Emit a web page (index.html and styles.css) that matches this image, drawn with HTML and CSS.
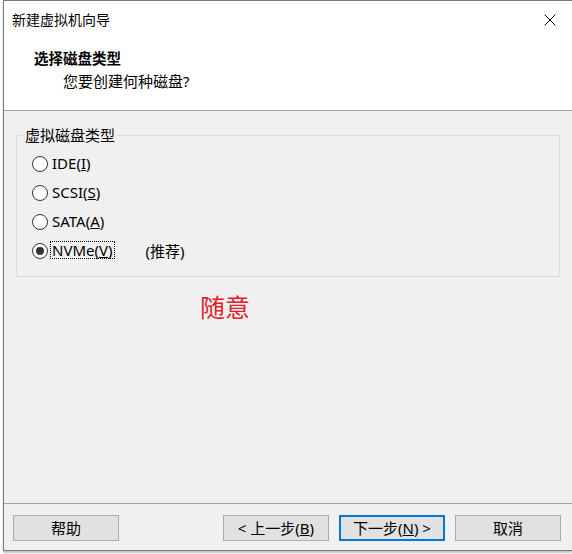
FILE: index.html
```html
<!DOCTYPE html>
<html>
<head>
  <title>新建虚拟机向导</title>
  <link rel="stylesheet" href="styles.css">
</head>
<body>
  <div class="window">
    <div class="header">
      <div class="titlebar">
        <span class="title">新建虚拟机向导</span>
        <svg class="close" width="12" height="12" viewBox="0 0 12 12">
          <path d="M0.5 0.5 L11.5 11.5 M11.5 0.5 L0.5 11.5" stroke="#000" stroke-width="1" fill="none"/>
        </svg>
      </div>
      <div class="heading">选择磁盘类型</div>
      <div class="subheading">您要创建何种磁盘?</div>
    </div>

    <div class="content">
      <fieldset class="group">
        <legend>虚拟磁盘类型</legend>
        <label class="option"><span class="radio"></span><span class="text">IDE(<u>I</u>)</span></label>
        <label class="option"><span class="radio"></span><span class="text">SCSI(<u>S</u>)</span></label>
        <label class="option"><span class="radio"></span><span class="text">SATA(<u>A</u>)</span></label>
        <label class="option"><span class="radio checked"></span><span class="text focus">NVMe(<u>V</u>)</span><span class="note">(推荐)</span></label>
      </fieldset>
      <div class="remark">随意</div>
    </div>

    <div class="footer">
      <button class="btn">帮助</button>
      <span class="spacer"></span>
      <button class="btn">&lt; 上一步(<u>B</u>)</button>
      <button class="btn default">下一步(<u>N</u>) &gt;</button>
      <button class="btn">取消</button>
    </div>
  </div>
</body>
</html>
```

FILE: styles.css
```css
body {
  margin: 0;
  width: 572px;
  height: 554px;
  overflow: hidden;
  background: #ffffff;
  font-family: "Noto Sans", "Noto Sans CJK SC", sans-serif;
  font-size: 15px;
  color: #000;
}

.window {
  box-sizing: border-box;
  margin-left: 3px;
  width: 569px;
  height: 551px;
  border: 1px solid #7a7a7a;
  border-right: none;
  background: #f0f0f0;
  display: flex;
  flex-direction: column;
  box-shadow: 0 2px 2px rgba(0, 0, 0, 0.25);
}

.header {
  background: #ffffff;
  height: 110px;
  box-sizing: border-box;
  border-bottom: 1px solid #a0a0a0;
}

.titlebar {
  height: 38px;
  display: flex;
  align-items: center;
  justify-content: space-between;
  padding: 0 16px 0 8px;
}

.title {
  font-size: 14px;
  line-height: 20px;
}

.close {
  display: block;
}

.heading {
  margin-top: 9px;
  padding-left: 30px;
  font-size: 14.5px;
  font-weight: bold;
  line-height: 20px;
}

.subheading {
  margin-top: 3px;
  padding-left: 59px;
  line-height: 20px;
}

.content {
  flex: 1;
  padding-top: 14px;
}

.group {
  margin: 0 12px;
  padding: 4px 0 11px 6px;
  border: 1px solid #dcdcdc;
}

.group legend {
  padding: 0 2px;
  line-height: 20px;
}

.option {
  display: flex;
  align-items: center;
  height: 29px;
}

.radio {
  box-sizing: border-box;
  width: 16px;
  height: 16px;
  margin-left: 9px;
  margin-right: 4px;
  border: 1px solid #333333;
  border-radius: 50%;
  background: #ffffff;
  display: flex;
  align-items: center;
  justify-content: center;
}

.radio.checked::after {
  content: "";
  width: 8px;
  height: 8px;
  border-radius: 50%;
  background: #333333;
}

.text {
  line-height: 16px;
  margin-top: -1px;
}

.focus {
  outline: 1px dotted #000;
  outline-offset: 0;
  margin-left: -1px;
  padding: 0 1px;
}

.note {
  margin-left: 32px;
  margin-top: -1px;
}

.remark {
  margin-top: 15px;
  margin-left: 196px;
  font-size: 25px;
  line-height: 30px;
  color: #e3202a;
}

.footer {
  box-sizing: border-box;
  height: 47px;
  border-top: 1px solid #a0a0a0;
  padding: 11px 11px 0 9px;
  display: flex;
  align-items: flex-start;
  gap: 10px;
}

.spacer {
  flex: 1;
}

.btn {
  box-sizing: border-box;
  width: 106px;
  height: 26px;
  padding: 0;
  background: #e1e1e1;
  border: 1px solid #adadad;
  font-family: inherit;
  font-size: 15px;
  line-height: 20px;
  color: #000;
}

.btn.default {
  border: 2px solid #0078d7;
}
```
